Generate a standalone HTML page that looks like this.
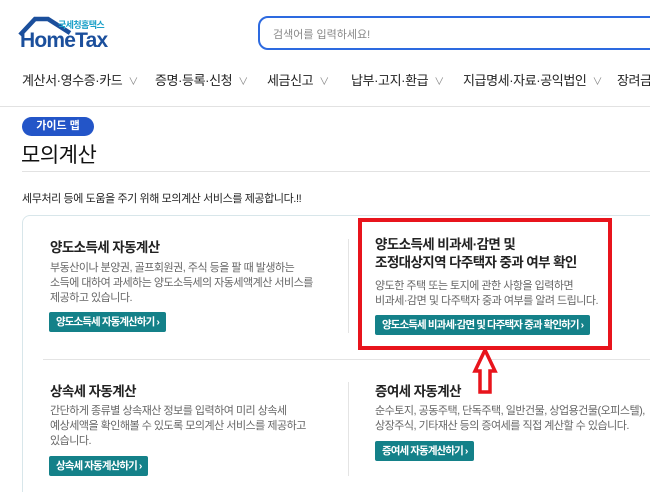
<!DOCTYPE html>
<html><head><meta charset="utf-8"><style>
*{margin:0;padding:0;box-sizing:border-box}
html,body{width:650px;height:492px;overflow:hidden}
body{background:#fff;font-family:"Liberation Sans","Noto Sans CJK KR",sans-serif;color:#222;position:relative}
.a{position:absolute;white-space:nowrap}
.nav{top:70px;font-size:13px;color:#222;letter-spacing:-0.4px}
.nav i{font-style:normal;color:#888;font-size:10px;margin-left:6px}
.t{font-size:13.5px;font-weight:bold;color:#222;letter-spacing:-0.6px}
.d{font-size:11px;color:#666;line-height:15px;letter-spacing:-0.5px}
.b{background:#148189;color:#fff;font-size:10.5px;font-weight:bold;height:20px;line-height:20px;padding:0 7px;border-radius:2px;letter-spacing:-0.9px}
</style></head><body>
<svg class="a" style="left:15px;top:14px" width="70" height="24" viewBox="0 0 70 24">
<path d="M5 21 L20 5 L33 5 L55 19" fill="none" stroke="#1b4f9c" stroke-width="4.5" stroke-linejoin="miter"/>
</svg>
<div class="a" style="left:58px;top:18px;font-size:9px;color:#1aa0c8;font-weight:bold;letter-spacing:-0.6px">국세청홈택스</div>
<div class="a" style="left:20px;top:29px;font-size:21px;font-weight:bold;color:#1b4f9c;letter-spacing:-0.8px">HomeTax</div>
<div class="a" style="left:258px;top:16px;width:420px;height:34px;border:2px solid #2d6ae0;border-radius:10px"></div>
<div class="a" style="left:273px;top:26px;font-size:11px;color:#888">검색어를 입력하세요!</div>
<div class="a nav" style="left:22px">계산서·영수증·카드<i>∨</i></div>
<div class="a nav" style="left:155px">증명·등록·신청<i>∨</i></div>
<div class="a nav" style="left:267px">세금신고<i>∨</i></div>
<div class="a nav" style="left:351px">납부·고지·환급<i>∨</i></div>
<div class="a nav" style="left:463px">지급명세·자료·공익법인<i>∨</i></div>
<div class="a nav" style="left:617px">장려금·</div>
<div class="a" style="left:0;top:106px;width:650px;height:1px;background:#e2e2e2"></div>
<div class="a" style="left:22px;top:117px;width:72px;height:19px;border-radius:10px;background:#2355c8;color:#fff;font-size:11px;font-weight:bold;text-align:center;line-height:19px">가이드 맵</div>
<div class="a" style="left:21px;top:139px;font-size:21px;color:#111;letter-spacing:-0.5px">모의계산</div>
<div class="a" style="left:22px;top:171px;width:628px;height:1px;background:#e2e2e2"></div>
<div class="a" style="left:22px;top:190px;font-size:11px;color:#222;letter-spacing:-0.4px">세무처리 등에 도움을 주기 위해 모의계산 서비스를 제공합니다.!!</div>
<div class="a" style="left:22px;top:215px;width:660px;height:300px;border:1px solid #d8e6ea;border-radius:8px"></div>
<div class="a" style="left:348px;top:239px;width:1px;height:94px;background:#e4e4e4"></div>
<div class="a" style="left:348px;top:382px;width:1px;height:94px;background:#e4e4e4"></div>
<div class="a" style="left:43px;top:359px;width:620px;height:1px;background:#e4e4e4"></div>

<div class="a t" style="left:50px;top:236px">양도소득세 자동계산</div>
<div class="a d" style="left:50px;top:261px">부동산이나 분양권, 골프회원권, 주식 등을 팔 때 발생하는<br>소득에 대하여 과세하는 양도소득세의 자동세액계산 서비스를<br>제공하고 있습니다.</div>
<div class="a b" style="left:49px;top:312px">양도소득세 자동계산하기 ›</div>

<div class="a t" style="left:375px;top:236px;line-height:18px">양도소득세 비과세·감면 및<br>조정대상지역 다주택자 중과 여부 확인</div>
<div class="a d" style="left:375px;top:279px">양도한 주택 또는 토지에 관한 사항을 입력하면<br>비과세·감면 및 다주택자 중과 여부를 알려 드립니다.</div>
<div class="a b" style="left:375px;top:315px">양도소득세 비과세·감면 및 다주택자 중과 확인하기 ›</div>
<div class="a" style="left:358px;top:218px;width:254px;height:132px;border:4px solid #e8141c"></div>
<svg class="a" style="left:472px;top:347px" width="26" height="48" viewBox="0 0 26 48">
<path d="M13 3 L23 24 L18 24 L18 45 L8 45 L8 24 L3 24 Z" fill="#fff" stroke="#e8141c" stroke-width="3.5" stroke-linejoin="miter"/>
</svg>

<div class="a t" style="left:50px;top:380px">상속세 자동계산</div>
<div class="a d" style="left:50px;top:404px">간단하게 종류별 상속재산 정보를 입력하여 미리 상속세<br>예상세액을 확인해볼 수 있도록 모의계산 서비스를 제공하고<br>있습니다.</div>
<div class="a b" style="left:49px;top:456px">상속세 자동계산하기 ›</div>

<div class="a t" style="left:375px;top:380px">증여세 자동계산</div>
<div class="a d" style="left:375px;top:404px">순수토지, 공동주택, 단독주택, 일반건물, 상업용건물(오피스텔),<br>상장주식, 기타재산 등의 증여세를 직접 계산할 수 있습니다.</div>
<div class="a b" style="left:375px;top:441px">증여세 자동계산하기 ›</div>
</body></html>
